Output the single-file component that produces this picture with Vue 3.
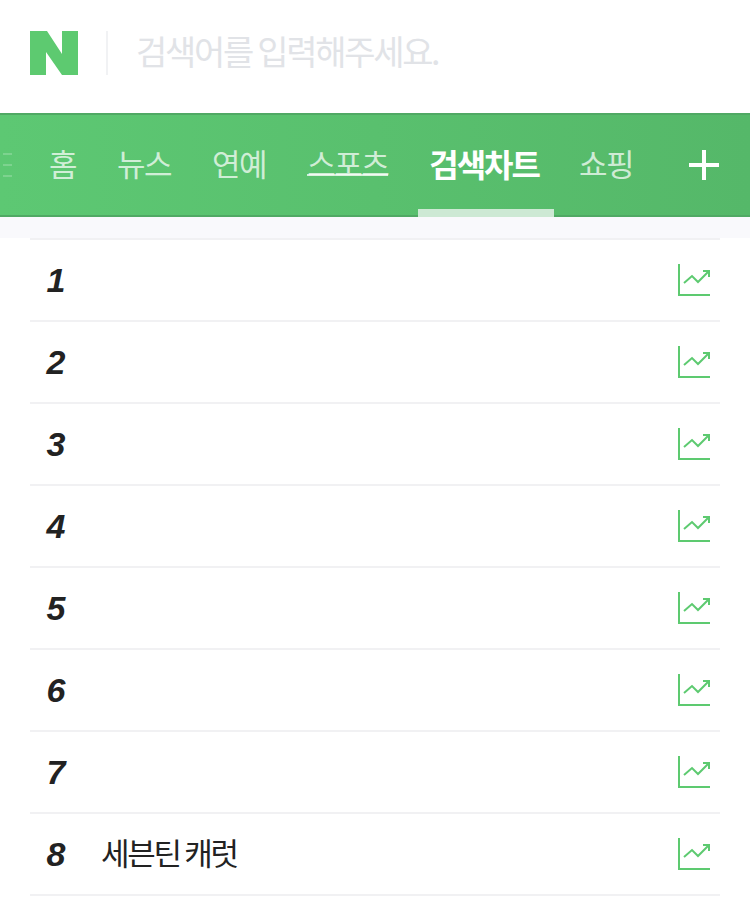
<script setup>
const tabs = [
  { name: "홈" },
  { name: "뉴스" },
  { name: "연예" },
  { name: "스포츠", line: true },
  { name: "검색차트", active: true },
  { name: "쇼핑" },
];

const rows = [
  { rank: 1, title: "" },
  { rank: 2, title: "" },
  { rank: 3, title: "" },
  { rank: 4, title: "" },
  { rank: 5, title: "" },
  { rank: 6, title: "" },
  { rank: 7, title: "" },
  { rank: 8, title: "세븐틴 캐럿" },
];
</script>

<template>
  <div class="page">
    <header class="searchBar">
      <svg class="logo" width="48" height="44" viewBox="0 0 48 44">
        <path d="M0 0H17L32 23V0H48V44H32L16 21V44H0Z" fill="#5dca70" />
      </svg>
      <span class="divider"></span>
      <span class="placeholder">검색어를 입력해주세요.</span>
    </header>

    <nav class="nav">
      <span class="ticks"><i></i><i></i><i></i></span>
      <ul class="tabs">
        <li v-for="tab in tabs" :key="tab.name" class="tab" :class="{ active: tab.active }">
          <span :class="{ underlined: tab.line }">{{ tab.name }}</span>
        </li>
      </ul>
      <svg class="plus" width="30" height="30" viewBox="0 0 30 30">
        <path d="M13 0h4v13H30v4H17V30h-4V17H0v-4h13z" fill="#fff" />
      </svg>
    </nav>

    <div class="spacer"></div>

    <ol class="chart">
      <li v-for="row in rows" :key="row.rank" class="row">
        <span class="rank">{{ row.rank }}</span>
        <span class="title">{{ row.title }}</span>
        <svg class="trend" width="32" height="32" viewBox="0 0 32 32" fill="none" stroke="#5dca70">
          <path d="M1 0V31H32" stroke-width="2" />
          <path d="M6 19L14 12L20 18L31 7" stroke-width="2" />
          <path d="M25 7H31V13" stroke-width="2" />
        </svg>
      </li>
    </ol>
  </div>
</template>

<style>
html,
body {
  margin: 0;
  background: #fff;
}
</style>

<style scoped>
.page {
  width: 750px;
  height: 897px;
  overflow: hidden;
  background: #fff;
  font-family: "Noto Sans CJK KR", "Liberation Sans", sans-serif;
}

.searchBar {
  height: 113px;
  box-sizing: border-box;
  display: flex;
  align-items: flex-start;
  padding: 31px 30px 0;
}

.divider {
  width: 2px;
  height: 44px;
  margin: 0 28px 0 28px;
  background: #f1f2f4;
}

.placeholder {
  font-size: 34px;
  line-height: 40px;
  letter-spacing: -2.3px;
  color: #e1e3e7;
}

.nav {
  height: 104px;
  box-sizing: border-box;
  display: flex;
  align-items: flex-start;
  border-top: 2px solid #50a964;
  border-bottom: 2px solid #50a964;
  background: linear-gradient(90deg, #5dc873, #55b869);
}

.ticks {
  width: 9px;
  margin: 38px 25px 0 3px;
  display: flex;
  flex-direction: column;
  gap: 9px;
}

.ticks i {
  height: 2px;
  background: rgba(255, 255, 255, 0.2);
}

.tabs {
  list-style: none;
  margin: 0;
  padding: 0;
  display: flex;
  gap: 17px;
  flex: 1;
}

.tab {
  height: 100px;
  padding: 0 12px;
  display: flex;
  justify-content: center;
  font-size: 31px;
  line-height: 96px;
  letter-spacing: -1.5px;
  color: rgba(255, 255, 255, 0.72);
  white-space: nowrap;
}

.tab span {
  display: block;
}

.tab .underlined {
  height: 59px;
  line-height: 96px;
  border-bottom: 2px solid rgba(255, 255, 255, 0.72);
}

.tab.active {
  height: 94px;
  margin: 0 -4px 0 1px;
  padding: 0 15px 0 11px;
  font-size: 32px;
  font-weight: 700;
  color: #fff;
  letter-spacing: -2px;
  border-bottom: 8px solid #cde9d4;
}

.plus {
  margin: 35px 31px 0 0;
}

.spacer {
  height: 21px;
  background: #f9f9fc;
}

.chart {
  list-style: none;
  margin: 0;
  padding: 0 30px;
}

.row {
  height: 82px;
  box-sizing: border-box;
  display: flex;
  align-items: center;
  border-top: 2px solid #f1f1f3;
}

.row:last-child {
  height: 84px;
  border-bottom: 2px solid #f1f1f3;
}

.rank {
  width: 71px;
  text-align: center;
  padding-right: 19px;
  box-sizing: border-box;
  font-family: "Liberation Sans", sans-serif;
  font-size: 34px;
  font-weight: 700;
  font-style: italic;
  color: #222;
}

.title {
  flex: 1;
  margin-bottom: 6px;
  font-size: 31px;
  letter-spacing: -2.3px;
  color: #222;
}

.trend {
  margin-right: 10px;
}
</style>
